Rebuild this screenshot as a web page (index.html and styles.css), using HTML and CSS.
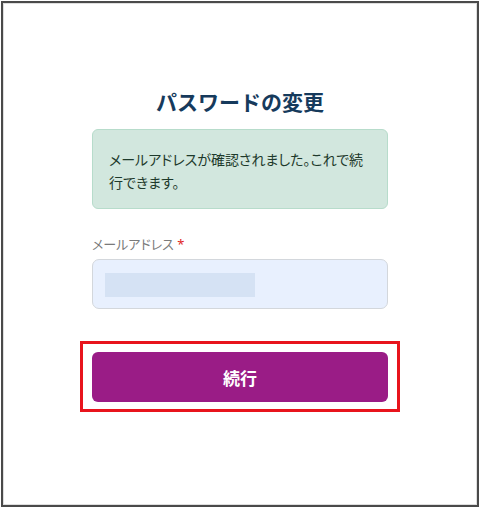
FILE: index.html
```html
<!DOCTYPE html>
<html lang="ja">
<head>
<meta charset="utf-8" />
<title>パスワードの変更</title>
<link rel="stylesheet" href="styles.css">
</head>
<body>
<div class="frame">
  <div class="card">
    <div class="form">
      <h1 class="title">パスワードの変更</h1>
      <div class="alert">メールアドレスが確認されました。これで続行できます。</div>
      <label class="label" for="email">メールアドレス <span class="req">*</span></label>
      <div class="input" id="email"><span class="masked"></span></div>
      <div class="mark">
        <button class="btn" type="button">続行</button>
      </div>
    </div>
  </div>
</div>
</body>
</html>
```

FILE: styles.css
```css
*{ margin:0; padding:0; box-sizing:border-box;}
body{ background:#fff; padding:1px; font-family:"Noto Sans","Noto Sans CJK JP",sans-serif;}
.frame{ width:478px; height:506px; border:2px solid #4a4a4a;}
.card{ height:100%; border:1px solid #dedede; padding-top:83px;}
.form{ width:296px; margin:0 auto; display:flex; flex-direction:column;}
.title{ font-size:21px; line-height:30px; font-weight:700; color:#163a5c; text-align:center;}
.alert{ margin-top:12px; height:80px; padding:18px 16px 0; border:1px solid #b7dccb; border-radius:6px; background:#d2e7de; color:#1e3a2c; font-size:14px; line-height:23px; font-feature-settings:"palt";}
.label{ margin-top:25px; font-size:13px; line-height:20px; color:#7a7a7a; font-feature-settings:"palt";}
.req{ color:#e02424;}
.input{ margin-top:5px; height:50px; border:1px solid #d3d7dc; border-radius:7px; background:#e8f0fe; padding:13px 0 0 12px;}
.masked{ display:block; width:150px; height:24px; background:#d5e2f4;}
.mark{ margin:32px -12px 0; padding:8px 9px 7px; border:3px solid #e8141c;}
.btn{ width:100%; height:50px; border:0; border-radius:6px; background:#9a1c86; color:#fff; font-family:inherit; font-size:17px; font-weight:700;}
```
